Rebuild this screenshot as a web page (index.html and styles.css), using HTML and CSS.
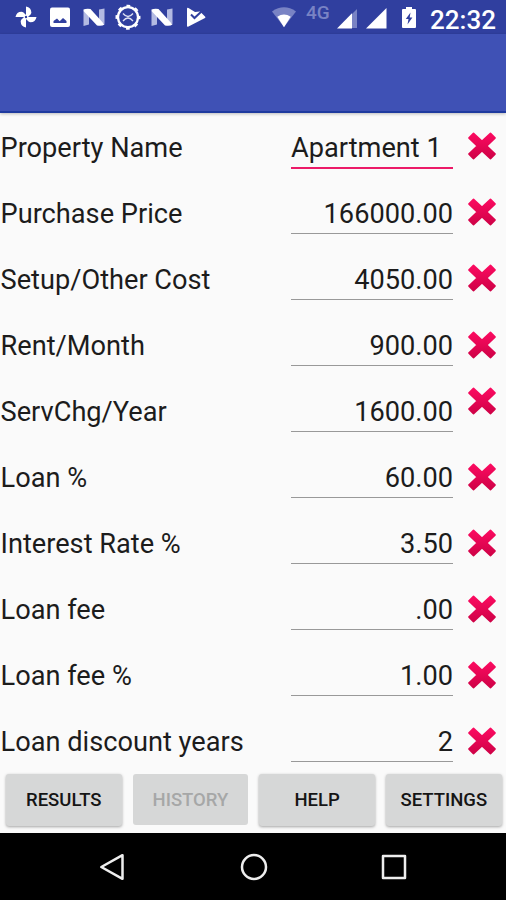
FILE: index.html
```
<!DOCTYPE html>
<html lang="en">

<head>
  <meta charset="UTF-8">
  <meta name="viewport" content="width=device-width, initial-scale=1.0">
  <title>Property</title>
  <link rel="stylesheet" href="styles.css">
</head>

<body>
  <!-- shared icons -->
  <svg class="defs" width="0" height="0">
    <defs>
      <linearGradient id="red" x1="0" y1="0" x2="0" y2="1">
        <stop offset="0" stop-color="#fb0a60"></stop>
        <stop offset="1" stop-color="#cf0247"></stop>
      </linearGradient>
      <symbol id="cross" viewBox="0 0 28 28">
        <path fill="url(#red)" stroke="url(#red)" stroke-width="2" stroke-linejoin="round" d="M5.4 1.6L14 9.6L22.6 1.6L26.8 6L18.4 14L26.8 22L22.6 26.4L14 18.4L5.4 26.4L1.2 22L9.6 14L1.2 6Z"></path>
      </symbol>
      <symbol id="nougat" viewBox="0 0 34 34">
        <path fill="#b3bae2" d="M6.5 11L12 12V24.5L6.5 26ZM22 9.5L27.5 8.5V24L22 21Z"></path>
        <path fill="#fff" d="M6.5 9.5Q9 8.5 13.5 9L27.5 24.5Q25 26.5 20 25.5L6.5 11Z"></path>
      </symbol>
    </defs>
  </svg>

  <header class="status">
    <div class="notifications">
      <svg viewBox="0 0 34 34">
        <g fill="#fff">
          <path id="blade" d="M17 18V6.5Q22.3 7.5 22.3 12.5Q22.3 13.5 21.5 14.5L18 18Z"></path>
          <use href="#blade" transform="rotate(90 17 17)"></use>
          <use href="#blade" transform="rotate(180 17 17)"></use>
          <use href="#blade" transform="rotate(270 17 17)"></use>
        </g>
        <circle cx="17" cy="17" r="1.2" fill="#303f9f"></circle>
      </svg>
      <svg viewBox="0 0 34 34">
        <rect x="7" y="7.5" width="20" height="19.5" rx="2" fill="#fff"></rect>
        <path fill="#303f9f" d="M10.5 23V21L14 18.5L16.7 21.2L20 18L23.5 21V23Z"></path>
      </svg>
      <svg viewBox="0 0 34 34"><use href="#nougat"></use></svg>
      <svg viewBox="0 0 34 34" fill="none" stroke="#fff">
        <circle cx="17" cy="17.2" r="10" stroke-width="2.3"></circle>
        <circle cx="17" cy="17.2" r="11.5" stroke-width="2" stroke-dasharray="3.8 5.23" stroke-dashoffset="1.9"></circle>
        <path stroke-width="1.3" stroke="#dfe2f3" d="M12 13.5Q17 19.5 22 13.5M12 21Q17 15 22 21"></path>
      </svg>
      <svg viewBox="0 0 34 34"><use href="#nougat"></use></svg>
      <svg viewBox="0 0 34 34">
        <path fill="#fff" d="M8 9Q8 7 9.5 8L16 12L21 11.5L26 16.5Q27 17.3 26 18L9 26.8Q8 27 8 26Z"></path>
        <path fill="none" stroke="#303f9f" stroke-width="2" d="M12 14.5L15.5 18L24 10"></path>
      </svg>
    </div>

    <div class="system">
      <svg class="wifi" viewBox="0 0 24 21">
        <path fill="#7983c4" d="M0 4.5Q12-3.8 24 4.5L12 20Z"></path>
        <path fill="#fff" d="M5.3 9.8Q12 5 18.7 9.8L12 20.3Z"></path>
      </svg>
      <span class="network">4G</span>
      <svg class="signal" viewBox="0 0 21 21">
        <path fill="#7983c4" d="M15 6L20 1V20H15Z"></path>
        <path fill="#fff" d="M0 20.5L15 5.2V20.5Z"></path>
      </svg>
      <svg class="signal" viewBox="0 0 21 21">
        <path fill="#fff" d="M0 20.5L20.5 0V20.5Z"></path>
      </svg>
      <svg class="battery" viewBox="0 0 14 21">
        <path fill="#fff" d="M4 2V0H10V2H13Q14 2 14 3V20Q14 21 13 21H1Q0 21 0 20V3Q0 2 1 2Z"></path>
        <path fill="#303f9f" d="M8.5 5.5L3.8 12H6.5L5.5 17.5L10.4 10.5H7.7Z"></path>
      </svg>
      <span class="clock">22:32</span>
    </div>
  </header>

  <div class="toolbar"></div>

  <main class="form">
    <div class="row">
      <span class="label">Property Name</span>
      <span class="field focused">Apartment 1</span>
      <svg class="clear"><use href="#cross"></use></svg>
    </div>
    <div class="row">
      <span class="label">Purchase Price</span>
      <span class="field">166000.00</span>
      <svg class="clear"><use href="#cross"></use></svg>
    </div>
    <div class="row">
      <span class="label">Setup/Other Cost</span>
      <span class="field">4050.00</span>
      <svg class="clear"><use href="#cross"></use></svg>
    </div>
    <div class="row">
      <span class="label">Rent/Month</span>
      <span class="field">900.00</span>
      <svg class="clear"><use href="#cross"></use></svg>
    </div>
    <div class="row">
      <span class="label">ServChg/Year</span>
      <span class="field">1600.00</span>
      <svg class="clear raised"><use href="#cross"></use></svg>
    </div>
    <div class="row">
      <span class="label">Loan %</span>
      <span class="field">60.00</span>
      <svg class="clear"><use href="#cross"></use></svg>
    </div>
    <div class="row">
      <span class="label">Interest Rate %</span>
      <span class="field">3.50</span>
      <svg class="clear"><use href="#cross"></use></svg>
    </div>
    <div class="row">
      <span class="label">Loan fee</span>
      <span class="field">.00</span>
      <svg class="clear"><use href="#cross"></use></svg>
    </div>
    <div class="row">
      <span class="label">Loan fee %</span>
      <span class="field">1.00</span>
      <svg class="clear"><use href="#cross"></use></svg>
    </div>
    <div class="row">
      <span class="label">Loan discount years</span>
      <span class="field">2</span>
      <svg class="clear"><use href="#cross"></use></svg>
    </div>
  </main>

  <div class="buttons">
    <button>RESULTS</button>
    <button disabled>HISTORY</button>
    <button>HELP</button>
    <button>SETTINGS</button>
  </div>

  <nav class="navbar">
    <svg viewBox="0 0 28 28"><path d="M2.3 14L23.5 2.2V25.8Z"></path></svg>
    <svg viewBox="0 0 28 28"><circle cx="14" cy="14" r="12"></circle></svg>
    <svg viewBox="0 0 28 28"><rect x="3" y="3" width="22" height="22"></rect></svg>
  </nav>
</body>

</html>
```
FILE: styles.css
```
body {
  display: flex;
  flex-direction: column;
  width: 506px;
  height: 900px;
  margin: 0;
  overflow: hidden;
  background: #fafafa;
  color: #1c1c1c;
  font-family: Roboto, sans-serif;
}

.defs {
  position: absolute;
}

/* status bar */
.status {
  display: flex;
  justify-content: space-between;
  height: 34px;
  padding: 0 10px 0 9px;
  background: #303f9f;
  color: #fff;
}

.notifications,
.system {
  display: flex;
}

.notifications svg {
  width: 34px;
  height: 34px;
}

.wifi {
  width: 24px;
  height: 21px;
  margin-top: 7px;
}

.network {
  width: 24px;
  margin: 3px 7px 0 10px;
  color: #7983c4;
  font-size: 19px;
  font-weight: 500;
  line-height: 20px;
}

.signal {
  width: 21px;
  height: 21px;
  margin: 8px 8px 0 0;
}

.battery {
  width: 14px;
  height: 21px;
  margin: 7px 14px 0 7px;
}

.clock {
  width: 66px;
  font-size: 26px;
  font-weight: 500;
  line-height: 40px;
}

.toolbar {
  box-sizing: border-box;
  height: 79px;
  border-bottom: 2px solid #1f3a9f;
  background: #3f51b5;
  box-shadow: 0 1px 3px rgba(0, 0, 0, .25);
}

/* form rows */
.form {
  height: 661px;
  display: grid;
  grid-template-rows: repeat(10, 66.06px);
}

.row {
  display: grid;
  grid-template-columns: 291px 162px 28px;
  align-items: start;
  font-size: 27.2px;
  line-height: 32px;
}

.label {
  padding: 19px 0 0 .5px;
}

.field {
  box-sizing: border-box;
  height: 55px;
  padding-top: 19px;
  border-bottom: 1.5px solid #999;
  text-align: right;
}

.focused {
  height: 56px;
  border-bottom: 2px solid #ec1a68;
  text-align: left;
}

.clear {
  width: 28px;
  height: 28px;
  margin: 19.4px 0 0 15px;
}

.raised {
  margin-top: 10px;
}

/* buttons */
.buttons {
  display: grid;
  grid-template-columns: repeat(4, 115.5px);
  gap: 11.2px;
  box-sizing: border-box;
  height: 59px;
  padding: 0 5px 0 6px;
}

button {
  height: 52px;
  padding: 0;
  border: 0;
  border-radius: 3px;
  background: #d6d7d7;
  color: #151515;
  box-shadow: 0 1px 3px rgba(0, 0, 0, .35);
  font: 500 18.5px Roboto, sans-serif;
}

button:disabled {
  height: 51px;
  color: #a6a7a7;
  box-shadow: none;
}

/* navigation bar */
.navbar {
  display: flex;
  justify-content: center;
  gap: 112.5px;
  height: 67px;
  padding-left: 1px;
  background: #000;
}

.navbar svg {
  width: 28px;
  height: 28px;
  margin-top: 19.5px;
  fill: none;
  stroke: #eee;
  stroke-width: 2.5;
  stroke-linejoin: round;
}
```
